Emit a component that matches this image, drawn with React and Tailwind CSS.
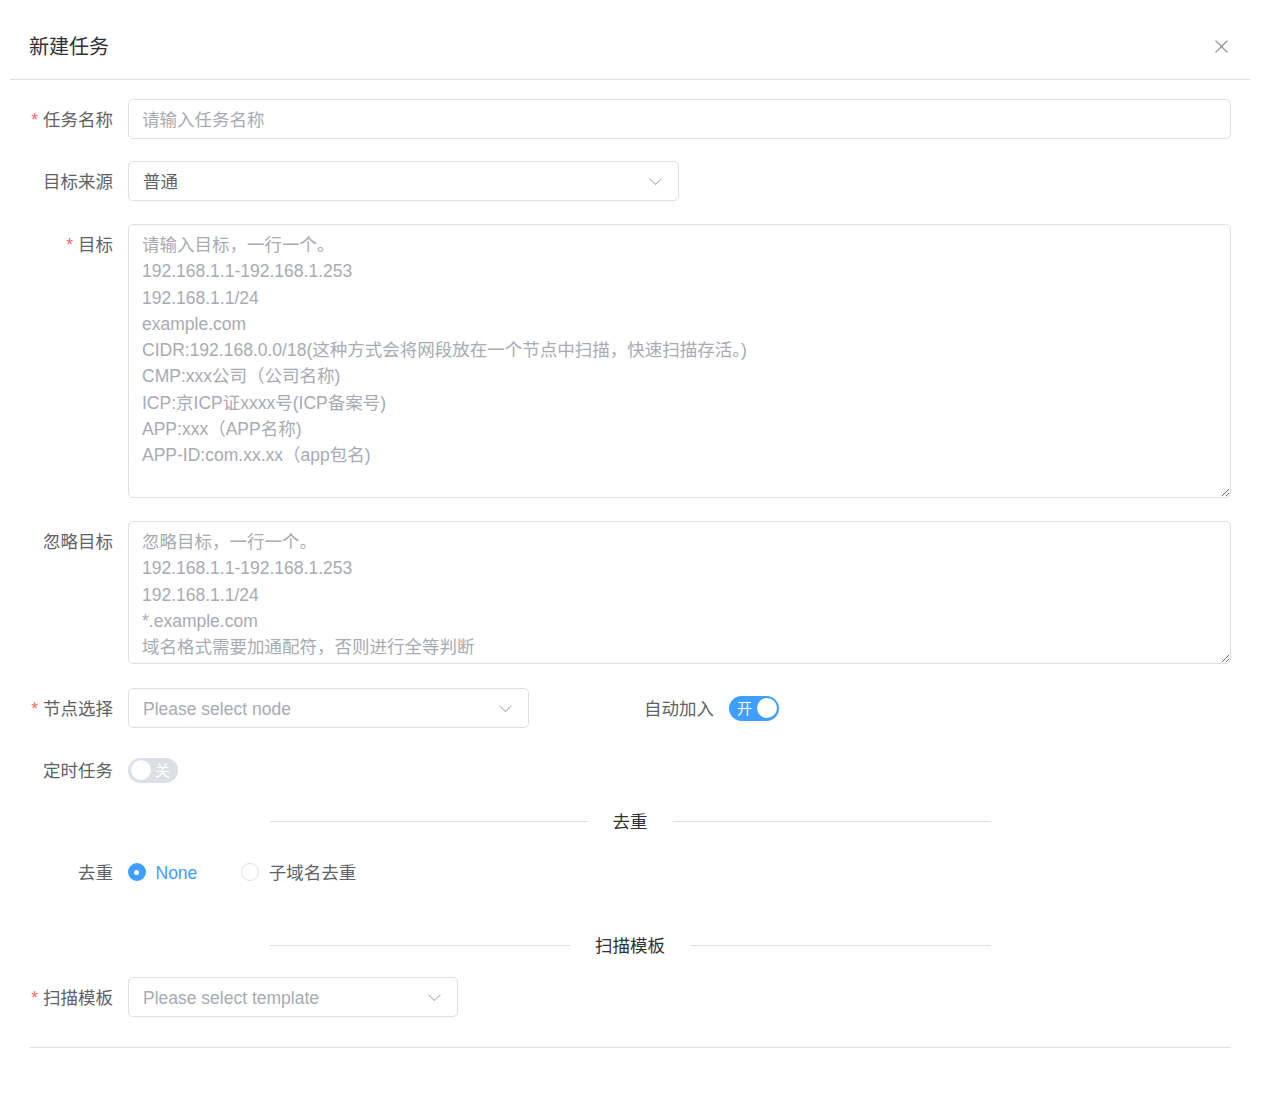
import React from "react";

const Chevron = () => (
  <svg viewBox="0 0 1024 1024" className="w-[17px] h-[17px] text-[#a8abb2]" fill="currentColor">
    <path d="M831.872 340.864 512 652.672 192.128 340.864a30.592 30.592 0 0 0-42.752 0 29.12 29.12 0 0 0 0 41.6L489.664 714.24a32 32 0 0 0 44.672 0l340.288-331.712a29.12 29.12 0 0 0 0-41.728 30.592 30.592 0 0 0-42.752 0z" />
  </svg>
);

const CloseIcon = () => (
  <svg viewBox="0 0 1024 1024" className="w-[21px] h-[21px] text-[#909399]" fill="currentColor">
    <path d="M764.288 214.592 512 466.88 259.712 214.592a31.936 31.936 0 0 0-45.12 45.12L466.752 512 214.528 764.224a31.936 31.936 0 1 0 45.12 45.184L512 557.184l252.288 252.288a31.936 31.936 0 0 0 45.12-45.12L557.12 512.064l252.288-252.352a31.936 31.936 0 1 0-45.12-45.184z" />
  </svg>
);

function Label({ children, required }) {
  return (
    <div className="w-[99px] shrink-0 h-[40px] leading-[42px] text-right pr-[15px] text-[#606266] whitespace-nowrap">
      {required && <span className="text-[#f56c6c] mr-[5px]">*</span>}
      {children}
    </div>
  );
}

function Select({ value, placeholder, widthClass }) {
  return (
    <div className={`${widthClass} h-[40px] border border-[#dcdfe6] rounded-[5px] flex items-center justify-between pl-[14px] pr-[14px]`}>
      {value ? (
        <span className="text-[#606266] pt-[2px]">{value}</span>
      ) : (
        <span className="text-[#a8abb2] pt-[2px]">{placeholder}</span>
      )}
      <Chevron />
    </div>
  );
}

const targetPh =
  "请输入目标，一行一个。\n192.168.1.1-192.168.1.253\n192.168.1.1/24\nexample.com\nCIDR:192.168.0.0/18(这种方式会将网段放在一个节点中扫描，快速扫描存活。)\nCMP:xxx公司（公司名称)\nICP:京ICP证xxxx号(ICP备案号)\nAPP:xxx（APP名称)\nAPP-ID:com.xx.xx（app包名)";

const ignorePh =
  "忽略目标，一行一个。\n192.168.1.1-192.168.1.253\n192.168.1.1/24\n*.example.com\n域名格式需要加通配符，否则进行全等判断";

function Divider({ text }) {
  return (
    <div className="w-[721px] mx-auto h-[24px] flex items-center">
      <div className="flex-1 h-px bg-[#dcdfe6]" />
      <span className="px-[25px] text-[#303133] leading-none translate-y-[2px]">{text}</span>
      <div className="flex-1 h-px bg-[#dcdfe6]" />
    </div>
  );
}

export default function App() {
  return (
    <div className="w-[1261px] min-h-[1104px] bg-white text-[17.5px] font-['Liberation_Sans','Noto_Sans_CJK_SC',sans-serif]">
      <div className="mx-[10px] h-[80px] pt-[14px] border-b border-[#dcdfe6] flex items-center justify-between pl-[19px] pr-[19px]">
        <span className="text-[20px] text-[#303133] leading-none">新建任务</span>
        <CloseIcon />
      </div>

      <div className="pl-[29px] pr-[30px] pt-[19px] flex flex-col">
        <div className="flex mb-[22px]">
          <Label required>任务名称</Label>
          <input
            className="flex-1 h-[40px] border border-[#dcdfe6] rounded-[5px] px-[13px] pt-[2px] text-[17.5px] text-[#606266] placeholder:text-[#a8abb2] outline-none"
            placeholder="请输入任务名称"
          />
        </div>

        <div className="flex mb-[23px]">
          <Label>目标来源</Label>
          <Select value="普通" widthClass="w-[551px]" />
        </div>

        <div className="flex mb-[23px]">
          <Label required>目标</Label>
          <textarea
            className="flex-1 h-[274px] border border-[#dcdfe6] rounded-[5px] px-[13px] pt-[7px] pb-[5px] text-[17.5px] leading-[26.25px] text-[#606266] placeholder:text-[#a8abb2] outline-none resize-y"
            placeholder={targetPh}
          />
        </div>

        <div className="flex mb-[24px]">
          <Label>忽略目标</Label>
          <textarea
            className="flex-1 h-[143px] border border-[#dcdfe6] rounded-[5px] px-[13px] pt-[7px] pb-[5px] text-[17.5px] leading-[26.25px] text-[#606266] placeholder:text-[#a8abb2] outline-none resize-y"
            placeholder={ignorePh}
          />
        </div>

        <div className="flex mb-[22px]">
          <div className="w-[601px] flex">
            <Label required>节点选择</Label>
            <Select placeholder="Please select node" widthClass="w-[401px]" />
          </div>
          <div className="flex items-center">
            <Label>自动加入</Label>
            <div className="w-[50px] h-[25px] rounded-full bg-[#409eff] flex items-center">
              <span className="pl-[8px] text-white text-[15px] leading-none">开</span>
              <span className="ml-auto mr-[2.5px] w-[20px] h-[20px] rounded-full bg-white" />
            </div>
          </div>
        </div>

        <div className="flex items-center">
          <Label>定时任务</Label>
          <div className="w-[50px] h-[25px] rounded-full bg-[#dcdfe6] flex items-center">
            <span className="ml-[2.5px] w-[20px] h-[20px] rounded-full bg-white" />
            <span className="ml-auto pr-[8px] text-white text-[15px] leading-none">关</span>
          </div>
        </div>

        <div className="mt-[19px]">
          <Divider text="去重" />
        </div>

        <div className="flex items-center mt-[19px]">
          <Label>去重</Label>
          <div className="flex items-center">
            <span className="w-[17.5px] h-[17.5px] rounded-full bg-[#409eff] flex items-center justify-center">
              <span className="w-[5px] h-[5px] rounded-full bg-white" />
            </span>
            <span className="ml-[10px] text-[#409eff] pt-[2px]">None</span>
          </div>
          <div className="flex items-center ml-[44px]">
            <span className="w-[17.5px] h-[17.5px] rounded-full border border-[#dcdfe6] bg-white" />
            <span className="ml-[10px] text-[#606266] pt-[2px]">子域名去重</span>
          </div>
        </div>

        <div className="mt-[41px]">
          <Divider text="扫描模板" />
        </div>

        <div className="flex mt-[20px]">
          <Label required>扫描模板</Label>
          <Select placeholder="Please select template" widthClass="w-[330px]" />
        </div>

        <div className="mt-[30px] border-t border-[#dcdfe6]" />
      </div>
    </div>
  );
}
